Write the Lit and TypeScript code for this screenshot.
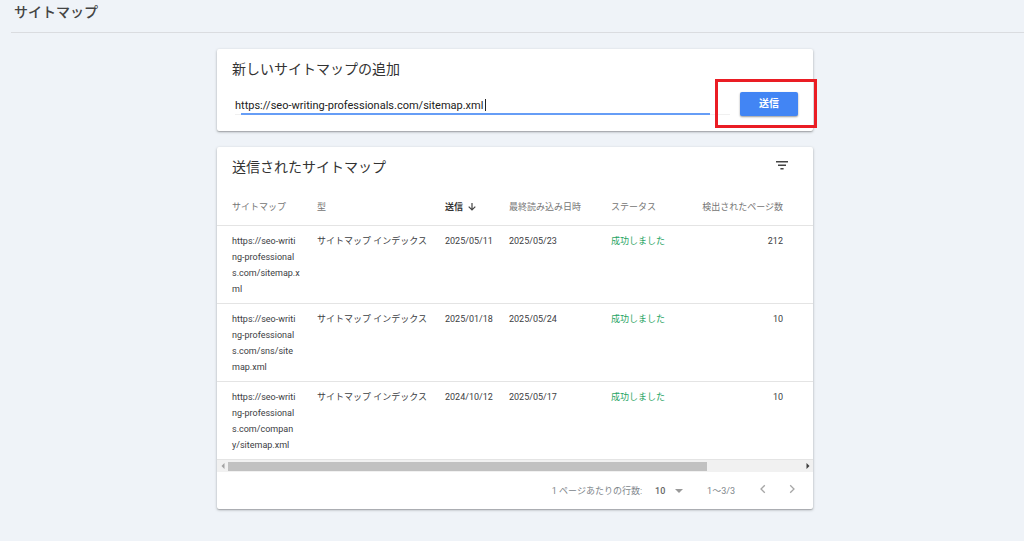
import { LitElement, html, css, svg } from "lit";
import { customElement, property, state, query } from "lit/decorators.js";

interface Sitemap {
  url: string[];
  type: string;
  sent: string;
  read: string;
  status: string;
  pages: number;
}

const SITEMAPS: Sitemap[] = [
  {
    url: ["https://seo-writi", "ng-professional", "s.com/sitemap.x", "ml"],
    type: "サイトマップ インデックス",
    sent: "2025/05/11",
    read: "2025/05/23",
    status: "成功しました",
    pages: 212,
  },
  {
    url: ["https://seo-writi", "ng-professional", "s.com/sns/site", "map.xml"],
    type: "サイトマップ インデックス",
    sent: "2025/01/18",
    read: "2025/05/24",
    status: "成功しました",
    pages: 10,
  },
  {
    url: ["https://seo-writi", "ng-professional", "s.com/compan", "y/sitemap.xml"],
    type: "サイトマップ インデックス",
    sent: "2024/10/12",
    read: "2025/05/17",
    status: "成功しました",
    pages: 10,
  },
];

const shared = css`
  * {
    box-sizing: border-box;
  }
  button,
  input,
  select {
    font: inherit;
    color: inherit;
    margin: 0;
    padding: 0;
    border: 0;
    background: none;
    outline: none;
  }
  button {
    cursor: pointer;
  }
  svg {
    display: block;
  }
  .card {
    background: #fff;
    border-radius: 2px;
    box-shadow: 0 1px 3px rgba(0, 0, 0, 0.28), 0 1px 1px rgba(0, 0, 0, 0.14);
  }
  .heading {
    margin: 0;
    font-size: 14px;
    line-height: 20px;
    font-weight: 400;
    color: #333;
  }
`;

@customElement("add-sitemap")
export class AddSitemap extends LitElement {
  static styles = [
    shared,
    css`
      :host {
        display: block;
      }
      .card {
        padding: 10px 15px 15px;
      }
      .form {
        display: flex;
        align-items: flex-start;
        gap: 10px;
        margin-top: 13px;
      }
      .field {
        position: relative;
        flex: 1;
        margin-left: 3px;
        border-bottom: 1px solid #f0f0f0;
      }
      .input {
        display: block;
        width: 100%;
        height: 22px;
        padding-top: 4px;
        font-size: 11px;
        line-height: 18px;
        color: #212121;
      }
      .ink {
        position: absolute;
        left: 6px;
        right: 20px;
        bottom: -1px;
        height: 2px;
        background: #669df6;
      }
      .caret {
        position: absolute;
        top: 7px;
        width: 1px;
        height: 12px;
        background: #222;
      }
      .action {
        position: relative;
      }
      .submit {
        display: block;
        width: 58px;
        height: 24px;
        border-radius: 2px;
        background: #4285f4;
        color: #fff;
        font-size: 10px;
        line-height: 24px;
        font-weight: 700;
        box-shadow: 0 1px 2px rgba(0, 0, 0, 0.4);
      }
      .mark {
        position: absolute;
        inset: -13px -19px -12px -25px;
        border: 3px solid #ea1d24;
        pointer-events: none;
      }
    `,
  ];

  @state() private value = "https://seo-writing-professionals.com/sitemap.xml";
  @state() private caret = 0;
  @query(".input") private input!: HTMLInputElement;

  firstUpdated() {
    this.measure();
    document.fonts.ready.then(() => this.measure());
  }

  private measure() {
    const ctx = document.createElement("canvas").getContext("2d");
    if (!ctx) return;
    const style = getComputedStyle(this.input);
    ctx.font = `${style.fontSize} ${style.fontFamily}`;
    this.caret = Math.ceil(ctx.measureText(this.value).width) + 1;
  }

  private onInput() {
    this.value = this.input.value;
    this.measure();
  }

  render() {
    return html`
      <section class="card">
        <h2 class="heading" id="add-title">新しいサイトマップの追加</h2>
        <form class="form" @submit=${(e: Event) => e.preventDefault()}>
          <div class="field">
            <input
              class="input"
              type="text"
              aria-labelledby="add-title"
              spellcheck="false"
              .value=${this.value}
              @input=${this.onInput}
            />
            <span class="caret" style="left:${this.caret}px"></span>
            <span class="ink"></span>
          </div>
          <div class="action">
            <button class="submit" type="submit">送信</button>
            <span class="mark"></span>
          </div>
        </form>
      </section>
    `;
  }
}

@customElement("sitemap-list")
export class SitemapList extends LitElement {
  static styles = [
    shared,
    css`
      :host {
        display: block;
      }
      .top {
        display: flex;
        justify-content: space-between;
        align-items: flex-start;
        padding: 10px 24px 0 15px;
      }
      .filter {
        width: 14px;
        height: 16px;
      }
      .table {
        width: 100%;
        margin-top: 10px;
        border-collapse: separate;
        border-spacing: 0;
        table-layout: fixed;
        font-size: 9px;
        line-height: 16px;
        color: #3c4043;
      }
      .url {
        width: 92px;
      }
      .type {
        width: 128px;
      }
      .sent {
        width: 64px;
      }
      .read {
        width: 102px;
      }
      .status {
        width: 88px;
      }
      th,
      td {
        padding: 7px 8px 6px;
        text-align: left;
        vertical-align: top;
        white-space: nowrap;
        border-bottom: 1px solid #e4e4e4;
      }
      th {
        padding: 12px 8px 10px;
        font-weight: 400;
        color: #757575;
      }
      th:first-child,
      td:first-child {
        padding-left: 15px;
      }
      th:last-child,
      td:last-child {
        padding-right: 30px;
        text-align: right;
      }
      .sort {
        display: flex;
        align-items: center;
        gap: 4px;
        font-weight: 700;
        color: #333;
      }
      .ok {
        color: #1fa463;
      }
      .bar {
        display: flex;
        align-items: center;
        height: 12px;
        background: #f1f1f1;
      }
      .arrow {
        width: 11px;
        height: 12px;
        display: grid;
        place-items: center;
      }
      .track {
        flex: 1;
      }
      .thumb {
        height: 9px;
        background: #c1c1c1;
      }
      .foot {
        display: flex;
        align-items: center;
        justify-content: flex-end;
        height: 37px;
        padding-right: 13px;
        font-size: 9px;
        line-height: 16px;
        color: #80868b;
      }
      .size {
        margin: 0 24px 0 13px;
        display: flex;
        align-items: center;
      }
      .select {
        appearance: none;
        width: 20px;
        height: 16px;
        font-weight: 500;
        color: #666;
      }
      .nav {
        display: flex;
        gap: 13px;
        margin-left: 20px;
        padding-bottom: 3px;
      }
      .page {
        width: 16px;
        height: 16px;
        display: grid;
        place-items: center;
      }
    `,
  ];

  @property({ attribute: false }) rows: Sitemap[] = [];

  private chevron(d: string) {
    return html`<svg width="16" height="16" viewBox="0 0 16 16" fill="none" stroke="#a6a6a6" stroke-width="1.3">${svg`<path d=${d} />`}</svg>`;
  }

  render() {
    return html`
      <section class="card">
        <div class="top">
          <h2 class="heading">送信されたサイトマップ</h2>
          <button class="filter" type="button" aria-label="フィルタ">
            <svg width="14" height="16" viewBox="0 0 14 16" fill="#444">
              <path d="M1 4h12v1.4H1zM3 7.5h8v1.4H3zM5.4 11h3.2v1.4H5.4z" />
            </svg>
          </button>
        </div>
        <table class="table">
          <thead>
            <tr>
              <th class="url" scope="col">サイトマップ</th>
              <th class="type" scope="col">型</th>
              <th class="sent" scope="col" aria-sort="descending">
                <button class="sort" type="button">
                  送信
                  <svg width="10" height="10" viewBox="0 0 10 10" fill="none" stroke="#444" stroke-width="1.2">
                    <path d="M5 1v7M1.7 4.7 5 8l3.3-3.3" />
                  </svg>
                </button>
              </th>
              <th class="read" scope="col">最終読み込み日時</th>
              <th class="status" scope="col">ステータス</th>
              <th scope="col">検出されたページ数</th>
            </tr>
          </thead>
          <tbody>
            ${this.rows.map(
              (r) => html`
                <tr>
                  <td>${r.url.map((part, i) => (i ? html`<br />${part}` : part))}</td>
                  <td>${r.type}</td>
                  <td>${r.sent}</td>
                  <td>${r.read}</td>
                  <td class="ok">${r.status}</td>
                  <td>${r.pages}</td>
                </tr>
              `
            )}
          </tbody>
        </table>
        <div class="bar">
          <button class="arrow" type="button" aria-label="左へスクロール">
            <svg width="4" height="6" viewBox="0 0 4 6" fill="#a3a3a3"><path d="M3.5 0v6L.5 3z" /></svg>
          </button>
          <div class="track"><div class="thumb" style="width:${(479 / 574) * 100}%"></div></div>
          <button class="arrow" type="button" aria-label="右へスクロール">
            <svg width="4" height="6" viewBox="0 0 4 6" fill="#404040"><path d="M.5 0v6l3-3z" /></svg>
          </button>
        </div>
        <div class="foot">
          <label for="size">1 ページあたりの行数:</label>
          <span class="size">
            <select class="select" id="size">
              <option>10</option>
            </select>
            <svg width="8" height="4" viewBox="0 0 8 4" fill="#999"><path d="M0 0h8L4 4z" /></svg>
          </span>
          <span>1〜3/3</span>
          <div class="nav">
            <button class="page" type="button" aria-label="前のページ">${this.chevron("M9.8 4.2 6 8l3.8 3.8")}</button>
            <button class="page" type="button" aria-label="次のページ">${this.chevron("M6.2 4.2 10 8l-3.8 3.8")}</button>
          </div>
        </div>
      </section>
    `;
  }
}

@customElement("app-root")
export class AppRoot extends LitElement {
  static styles = css`
    :host {
      display: block;
      box-sizing: border-box;
      min-height: 100vh;
      background: #eff3f8;
      font-family: Roboto, "Noto Sans CJK JP", sans-serif;
    }
    .bar {
      margin-left: 11px;
      padding: 2px 3px 10px;
      border-bottom: 1px solid #dadce0;
    }
    .title {
      margin: 0;
      font-size: 14px;
      line-height: 20px;
      font-weight: 500;
      color: #444;
    }
    .content {
      display: grid;
      gap: 16px;
      max-width: 596px;
      margin: 0 auto;
      padding: 16px 0 31px 6px;
    }
  `;

  render() {
    return html`
      <header class="bar"><h1 class="title">サイトマップ</h1></header>
      <main class="content">
        <add-sitemap></add-sitemap>
        <sitemap-list .rows=${SITEMAPS}></sitemap-list>
      </main>
    `;
  }
}
